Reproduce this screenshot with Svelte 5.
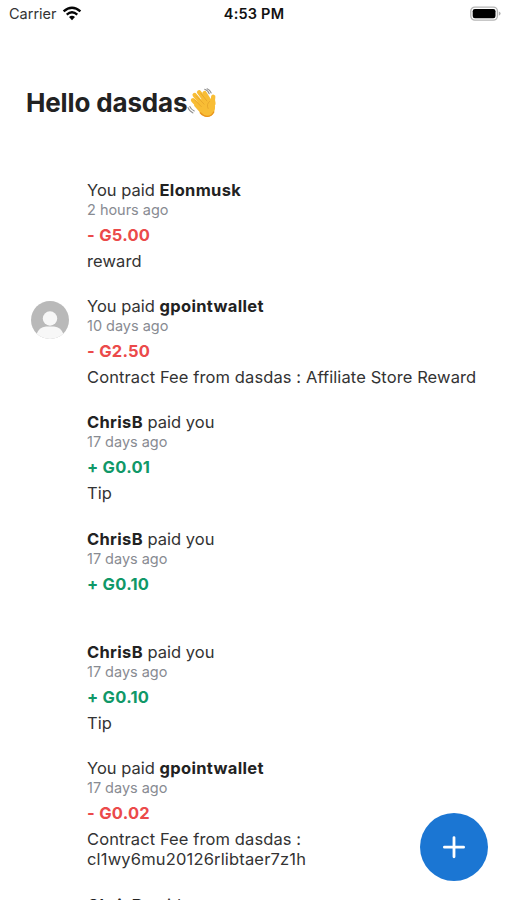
<script>
  const payments = [
    { dir: 'out', who: 'Elonmusk', when: '2 hours ago', amount: '5.00', note: ['reward'] },
    { dir: 'out', who: 'gpointwallet', when: '10 days ago', amount: '2.50', avatar: true, note: ['Contract Fee from dasdas : Affiliate Store Reward'] },
    { dir: 'in', who: 'ChrisB', when: '17 days ago', amount: '0.01', note: ['Tip'] },
    { dir: 'in', who: 'ChrisB', when: '17 days ago', amount: '0.10', note: [] },
    { dir: 'in', who: 'ChrisB', when: '17 days ago', amount: '0.10', note: ['Tip'] },
    { dir: 'out', who: 'gpointwallet', when: '17 days ago', amount: '0.02', note: ['Contract Fee from dasdas :', 'cl1wy6mu20126rlibtaer7z1h'] },
    { dir: 'in', who: 'ChrisB' }
  ];
</script>

<main class="screen">
  <header class="status">
    <div class="carrier">
      <span>Carrier</span>
      <svg width="20" height="16" viewBox="0 0 20 16" fill="none" stroke="#050505">
        <path d="M1.6 5.4Q10-2 18.4 5.4" stroke-width="2.4" />
        <path d="M4.7 8.6Q10 4 15.3 8.6" stroke-width="2.3" />
        <path d="M7 10.9Q10 8.4 13 10.9L10 14.2Z" fill="#050505" stroke="none" />
      </svg>
    </div>
    <span class="clock">4:53 PM</span>
    <svg class="battery" width="31" height="16" viewBox="0 0 31 16">
      <rect x=".8" y="1.1" width="26.6" height="13" rx="4" fill="#fff" stroke="#b5b5b5" stroke-width="1.3" />
      <rect x="2.7" y="3" width="22.8" height="9.2" rx="2.2" fill="#000" />
      <path d="M28.8 5.5Q30.6 6.2 30.6 7.6T28.8 9.7Z" fill="#b0b0b0" />
    </svg>
  </header>

  <h1>
    <span>Hello dasdas</span>
    <svg width="30" height="31" viewBox="0 0 29 30" fill="none" stroke-linecap="round">
      <g stroke="#f8bd35" stroke-width="4.2">
        <path d="M5.8 11.8 14 20.5" />
        <path d="M7.4 6.8 16 17" />
        <path d="M11.7 4.1 19 14" />
        <path d="M17 4.9 22 13" />
        <path d="M25.4 8.5Q24.6 11 25.6 15" />
      </g>
      <path d="M8 14.5 19.5 7.5 23 12.5Q23.3 10.4 25 10Q28.6 18 26.2 23.2C23.3 29.2 17.3 29.5 13.2 24.5L6.8 17.2Z" fill="#f8bd35" />
      <path d="M12.8 24C17 28.9 23 28.5 25.9 23.2" stroke="#e9941c" stroke-width="1.3" />
      <path d="M7.4 11.5 13.8 18M9 7.7 16.5 15.6M13.4 5.1 19.2 12.5M21.9 12.9Q18.3 15.9 20.4 19.8" stroke="#e2a028" stroke-width=".7" />
      <path d="M17.1 1.2Q20.2 2 21.5 5.6M19.4.7Q22.3 1.9 23.4 4.8M.9 18.8Q2.1 22.5 5.8 24.1M2.7 17.9Q3.7 20.7 7 22.2" stroke="#8e8e8e" stroke-width="1" />
    </svg>
  </h1>

  <section class="list">
    {#each payments as p}
      <article>
        <div class="picture">
          {#if p.avatar}
            <svg width="38" height="38" viewBox="0 0 38 38">
              <defs><clipPath id="face"><circle cx="19" cy="19" r="19" /></clipPath></defs>
              <g clip-path="url(#face)">
                <rect width="38" height="38" fill="#b9b9b9" />
                <circle cx="19" cy="17.5" r="7.2" fill="#f7f7f7" />
                <path d="M5 34Q8 25.7 15 25.4H23Q30 25.7 33 34V38H5Z" fill="#f7f7f7" />
              </g>
            </svg>
          {/if}
        </div>
        <div class="body">
          {#if p.dir === 'out'}
            <div class="title">You paid <b>{p.who}</b></div>
          {:else}
            <div class="title"><b>{p.who}</b> paid you</div>
          {/if}
          {#if p.when}
            <div class="when">{p.when}</div>
            <div class="amount {p.dir}">{p.dir === 'out' ? '-' : '+'} G{p.amount}</div>
            <div class="note">
              {#each p.note as line}<div>{line}</div>{/each}
            </div>
          {/if}
        </div>
      </article>
    {/each}
  </section>

  <button class="add" aria-label="Add">
    <svg width="68" height="68" viewBox="0 0 68 68" stroke="#fff" stroke-width="2.8" stroke-linecap="round">
      <path d="M34 24.6V43.8M24.4 34.2H43.6" />
    </svg>
  </button>
</main>

<style>
  :global(body) { margin: 0; background: #fff; }
  .screen {
    position: relative;
    box-sizing: border-box;
    height: 900px;
    overflow: hidden;
    background: #fff;
    color: #333;
    font-family: Inter, "Liberation Sans", sans-serif;
  }
  svg { display: block; flex: none; }
  .status {
    display: grid;
    grid-template-columns: 1fr auto 1fr;
    align-items: center;
    height: 27px;
    padding: 0 6px 0 9px;
  }
  .carrier { display: flex; align-items: center; gap: 5px; font-size: 14.5px; color: #333; }
  .clock { font-size: 14.5px; font-weight: 600; letter-spacing: 0.2px; color: #111; margin-left: -2px; }
  .battery { justify-self: end; }
  h1 {
    display: flex;
    align-items: center;
    height: 34px;
    margin: 58px 0 0 26px;
    font-size: 26px;
    font-weight: 650;
    letter-spacing: -0.15px;
    color: #222;
  }
  h1 svg { margin-top: 2px; }
  .list { padding-top: 60.6px; }
  article { display: flex; }
  .picture { width: 56px; padding: 5px 0 0 31px; }
  .body { margin-bottom: 25.1px; white-space: nowrap; }
  .title { height: 20px; line-height: 20px; font-size: 16.5px; }
  b { font-weight: 650; letter-spacing: 0.32px; color: #222; }
  .when { height: 20px; line-height: 20px; font-size: 14.5px; letter-spacing: -0.02px; color: #888b92; }
  .amount { height: 30px; line-height: 30px; font-size: 16.5px; font-weight: 650; letter-spacing: 0.25px; }
  .out { color: #eb4a4a; }
  .in { color: #109868; }
  .note {
    min-height: 16.9px;
    padding-top: 1px;
    line-height: 20.3px;
    font-size: 16.5px;
    letter-spacing: 0.1px;
    font-feature-settings: "calt" 0;
  }
  .note div + div { letter-spacing: 0.17px; }
  .add {
    position: absolute;
    left: 420px;
    top: 813px;
    width: 68px;
    height: 68px;
    padding: 0;
    border: 0;
    border-radius: 50%;
    background: #1b76d3;
  }
</style>
